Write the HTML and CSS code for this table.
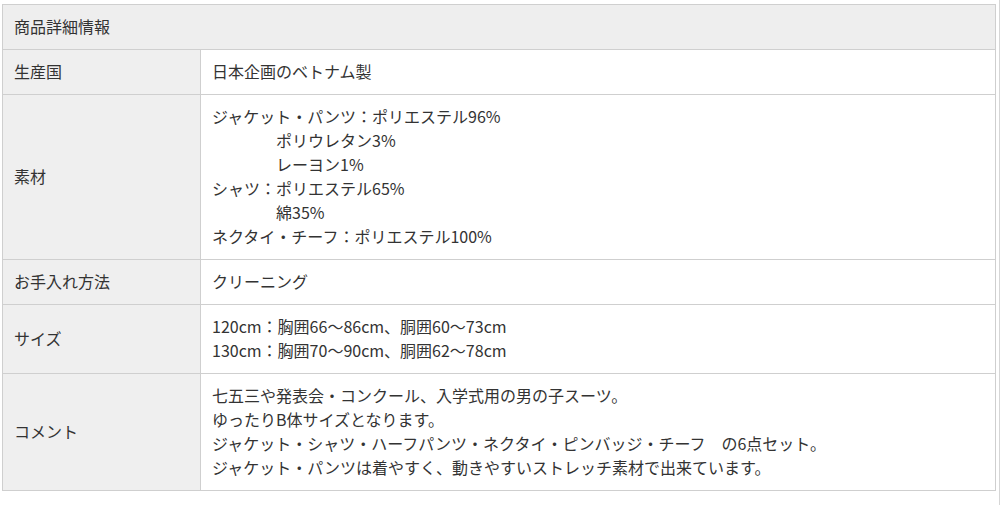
FILE: index.html
```html
<!DOCTYPE html>
<html lang="ja">
<head>
<meta charset="utf-8">
<title>商品詳細情報</title>
<link rel="stylesheet" href="styles.css">
</head>
<body>
<table class="spec">
  <colgroup>
    <col class="col-label">
    <col class="col-value">
  </colgroup>
  <thead>
    <tr><th class="spec-title" colspan="2">商品詳細情報</th></tr>
  </thead>
  <tbody>
    <tr><th class="label">生産国</th><td class="value">日本企画のベトナム製</td></tr>
    <tr><th class="label">素材</th><td class="value">ジャケット・パンツ：ポリエステル96%<br>　　　　ポリウレタン3%<br>　　　　レーヨン1%<br>シャツ：ポリエステル65%<br>　　　　綿35%<br>ネクタイ・チーフ：ポリエステル100%</td></tr>
    <tr><th class="label">お手入れ方法</th><td class="value">クリーニング</td></tr>
    <tr><th class="label">サイズ</th><td class="value">120cm：胸囲66～86cm、胴囲60～73cm<br>130cm：胸囲70～90cm、胴囲62～78cm</td></tr>
    <tr><th class="label">コメント</th><td class="value">七五三や発表会・コンクール、入学式用の男の子スーツ。<br>ゆったりB体サイズとなります。<br>ジャケット・シャツ・ハーフパンツ・ネクタイ・ピンバッジ・チーフ　の6点セット。<br>ジャケット・パンツは着やすく、動きやすいストレッチ素材で出来ています。</td></tr>
  </tbody>
</table>
</body>
</html>
```
FILE: styles.css
```css
html {
  border-right: 1px solid #d6d6d6;
  min-height: 100%;
}
body {
  margin: 0;
  padding: 4px 0 0 2px;
  background: #fff;
  font-family: "Noto Sans CJK JP", "Noto Sans", sans-serif;
  font-size: 16px;
  line-height: 24px;
  color: #333;
}
.spec {
  width: 994px;
  border-collapse: collapse;
  table-layout: fixed;
}
.col-label {
  width: 198px;
}
.spec th,
.spec td {
  border: 1px solid #cfcfcf;
  padding: 9px 11px 11px;
  text-align: left;
  font-weight: normal;
  vertical-align: middle;
}
.spec-title {
  background: #eeeeee;
}
.label {
  background: #efefef;
}
.value {
  background: #fff;
}
```
